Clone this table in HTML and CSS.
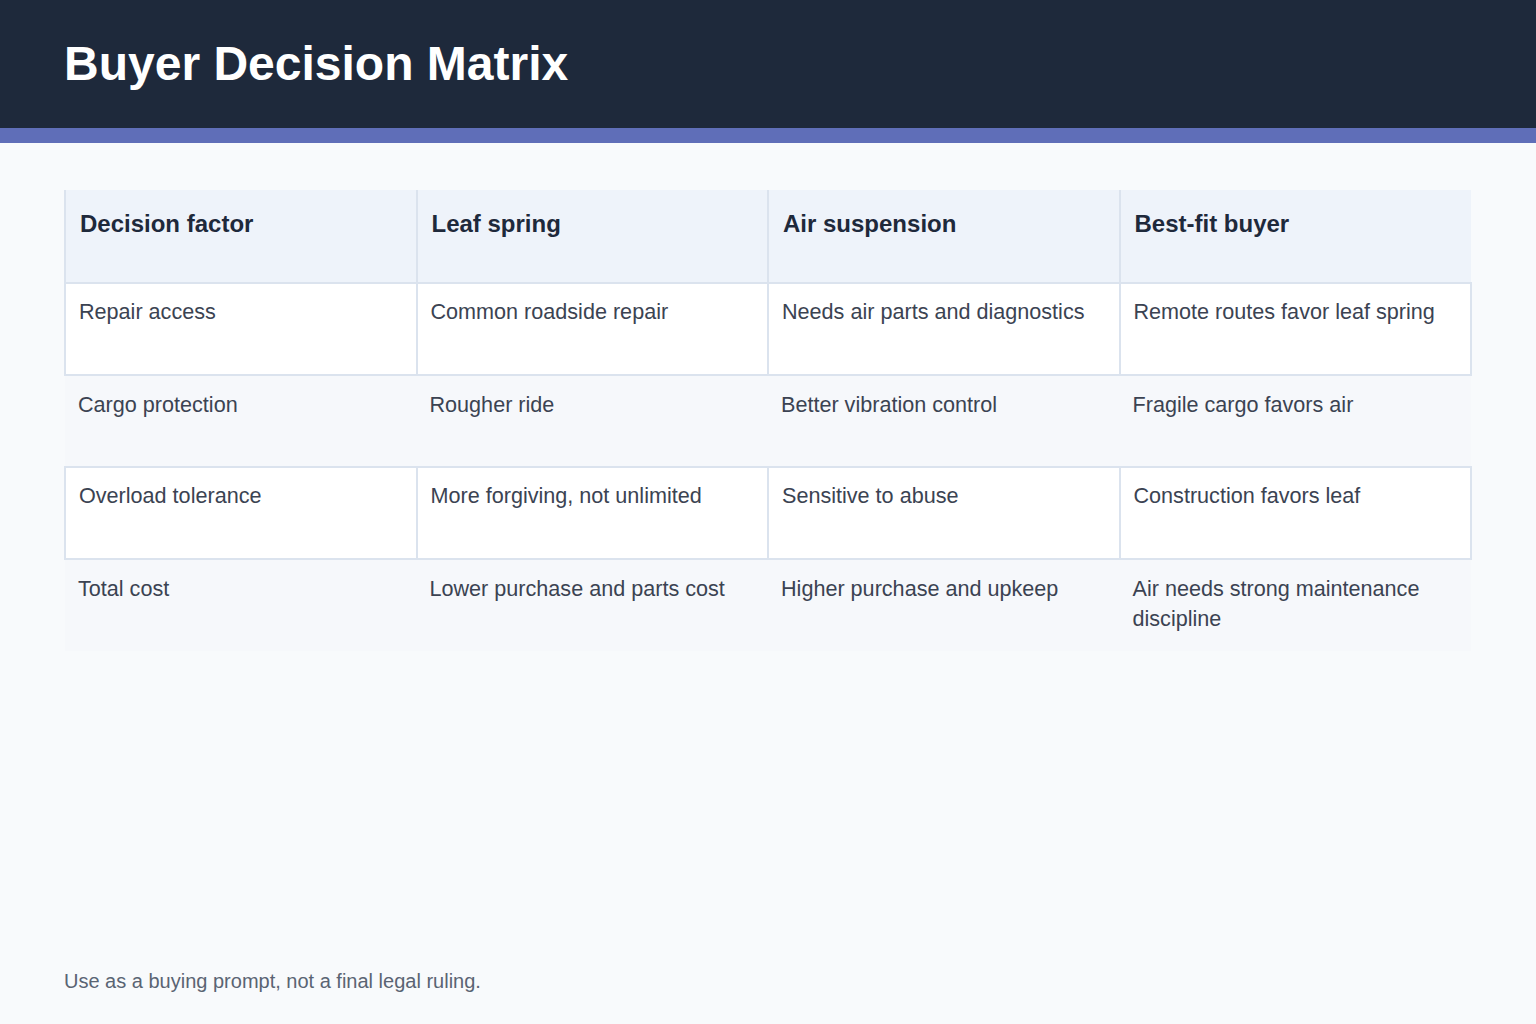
FILE: index.html
```html
<!DOCTYPE html>
<html lang="en">
<head>
<meta charset="utf-8">
<title>Buyer Decision Matrix</title>
<link rel="stylesheet" href="styles.css">
</head>
<body>
<div class="page">
  <header class="topbar">
    <h1 class="title">Buyer Decision Matrix</h1>
  </header>
  <div class="accent"></div>
  <main class="content">
    <table class="matrix">
      <thead>
        <tr class="head-row">
          <th>Decision factor</th>
          <th>Leaf spring</th>
          <th>Air suspension</th>
          <th>Best-fit buyer</th>
        </tr>
      </thead>
      <tbody>
        <tr class="row boxed">
          <td>Repair access</td>
          <td>Common roadside repair</td>
          <td>Needs air parts and diagnostics</td>
          <td>Remote routes favor leaf spring</td>
        </tr>
        <tr class="row plain">
          <td>Cargo protection</td>
          <td>Rougher ride</td>
          <td>Better vibration control</td>
          <td>Fragile cargo favors air</td>
        </tr>
        <tr class="row boxed">
          <td>Overload tolerance</td>
          <td>More forgiving, not unlimited</td>
          <td>Sensitive to abuse</td>
          <td>Construction favors leaf</td>
        </tr>
        <tr class="row plain">
          <td>Total cost</td>
          <td>Lower purchase and parts cost</td>
          <td>Higher purchase and upkeep</td>
          <td>Air needs strong maintenance discipline</td>
        </tr>
      </tbody>
    </table>
  </main>
  <footer class="footnote">Use as a buying prompt, not a final legal ruling.</footer>
</div>
</body>
</html>
```

FILE: styles.css
```css
* { box-sizing: border-box; }

html, body {
  margin: 0;
  padding: 0;
}

body {
  background: #f8fafc;
  font-family: "Liberation Sans", Arial, Helvetica, sans-serif;
  color: #374151;
}

.page {
  display: flex;
  flex-direction: column;
  height: 1024px;
}

.topbar {
  background: #1e293b;
  padding: 34px 64px 34px;
}

.title {
  margin: 0;
  color: #ffffff;
  font-size: 48px;
  line-height: 60px;
  font-weight: 700;
}

.accent {
  height: 15px;
  background: #5f6eb8;
}

.content {
  flex: 1;
  padding: 47px 64px 0;
}

.matrix {
  width: 1408px;
  border-collapse: collapse;
  table-layout: fixed;
}

.matrix th {
  background: #eef3fa;
  border-left: 2px solid #dbe3ee;
  border-bottom: 2px solid #dbe3ee;
  color: #1e293b;
  font-size: 24px;
  line-height: 32px;
  font-weight: 700;
  text-align: left;
  vertical-align: top;
  padding: 18px 14px 14px;
  height: 93px;
}

.matrix td {
  font-size: 21.6px;
  line-height: 30px;
  color: #3b4352;
  vertical-align: top;
  padding: 13px 13px;
  height: 92px;
}

.row.boxed td {
  background: #ffffff;
  border: 2px solid #dbe3ee;
}

.row.plain td {
  background: #f6f8fb;
  padding-top: 14px;
}

.footnote {
  padding: 0 64px 29px;
  font-size: 20px;
  line-height: 28px;
  color: #5a6473;
}
```
